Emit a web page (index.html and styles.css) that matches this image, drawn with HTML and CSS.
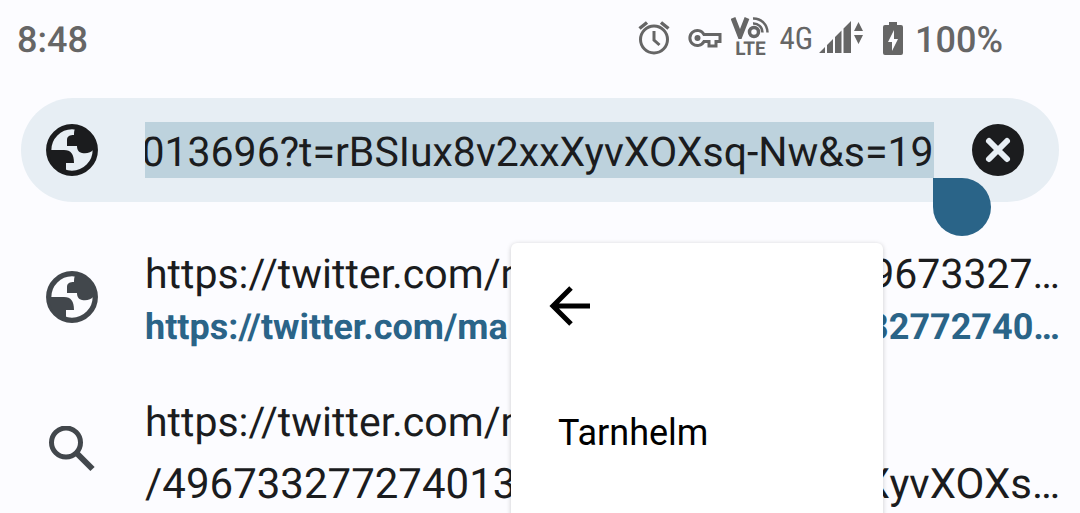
FILE: index.html
```
<!DOCTYPE html>
<html lang="en">
<head>
<meta charset="utf-8">
<meta name="viewport" content="width=device-width, initial-scale=1">
<title>Address bar</title>
<link rel="stylesheet" href="styles.css">
</head>
<body>
<header class="status">
  <time class="status-time">8:48</time>
  <div class="status-icons">
    <svg class="alarm" width="32" height="34" viewBox="0 0 32 34" fill="none" stroke="currentColor" stroke-width="3">
      <circle cx="16" cy="18.500" r="13.500"/><path d="M16 10v9l5.500 5"/><path d="M1.500 7.500L9 1.500M30.500 7.500L23 1.500" stroke-width="3.500"/>
    </svg>
    <svg class="key" width="34" height="20" viewBox="0 0 34 20" fill="none" stroke="currentColor" stroke-width="3">
      <path d="M16 6.500A7.500 7.500 0 1 0 16 13.500H21V18H28V13.500H32V6.500Z"/><circle cx="9.500" cy="10" r="3" fill="currentColor" stroke="none"/>
    </svg>
    <div class="volte">
      <svg width="38" height="22" viewBox="0 0 38 22" fill="none" stroke="currentColor">
        <path d="M2 1L9 19L16 1" stroke-width="5"/><circle cx="23" cy="15" r="4.500" stroke-width="3.500"/>
        <path d="M22 6.500a9 9 0 0 1 9.500 9M22 1.500a14 14 0 0 1 14.500 14" stroke-width="2.500"/>
      </svg>
      <span>LTE</span>
    </div>
    <span class="network">4G</span>
    <svg class="signal" width="44" height="32" viewBox="0 0 44 32" fill="currentColor">
      <path d="M0 32L6 26V32ZM8 24L14 18V32H8ZM16 16L22.500 9.500V32H16ZM24.500 7.500L32 0V32H24.500ZM35 10L39.500 1L44 10ZM35 14H44L39.500 23Z"/>
    </svg>
    <svg class="battery" width="20" height="33" viewBox="0 0 20 33">
      <path fill="currentColor" d="M6 0H14V3H18Q20 3 20 5V31Q20 33 18 33H2Q0 33 0 31V5Q0 3 2 3H6Z"/><path fill="#fcfcff" d="M11 8L5 20H9V29L15 17H11Z"/>
    </svg>
    <span class="percent">100%</span>
  </div>
</header>

<svg class="symbols" aria-hidden="true">
  <symbol id="globe" viewBox="0 0 52 52">
    <circle cx="26" cy="26" r="23.300" fill="none" stroke="currentColor" stroke-width="5.300"/>
    <path fill="currentColor" d="M30 3C42 5 50 15 48 25C45 29 40 30 36 29C32 28 31 25 31 22H21V16C21 12 24 11 28 11C28 8 28 6 30 3Z"/>
    <path fill="currentColor" d="M3 26H18C25 26 28 30 28 39H20V48C9 46 3 37 3 26Z"/>
  </symbol>
</svg>

<main>
  <form class="omnibox">
    <svg class="site-icon" width="52" height="52"><use href="#globe"/></svg>
    <div class="field">
      <input class="url" id="url" type="text" aria-label="Address" spellcheck="false" autocomplete="off" value="/496733277274013696?t=rBSIux8v2xxXyvXOXsq-Nw&amp;s=19">
      <span class="handle"></span>
    </div>
    <button class="clear" type="button" aria-label="Clear">
      <svg width="52" height="52" viewBox="0 0 52 52"><circle cx="26" cy="26" r="26" fill="#1b1c1e"/><path d="M17 17L35 35M35 17L17 35" stroke="#e7eef4" stroke-width="6" stroke-linecap="round"/></svg>
    </button>
  </form>

  <div class="suggestions">
    <a class="row" href="#first">
      <svg class="site-icon" width="52" height="52"><use href="#globe"/></svg>
      <span class="lines">
        <span class="line"><span>https://twitter.com/m</span><span>9673327…</span></span>
        <span class="line match"><span>https://twitter.com/ma</span><span>32772740…</span></span>
      </span>
    </a>
    <a class="row wrapped" href="#second">
      <svg class="site-icon" width="52" height="52" viewBox="0 0 52 52" fill="none" stroke="currentColor" stroke-width="5"><circle cx="20" cy="16.500" r="14.500"/><path d="M30.500 27L46.500 43" stroke-width="6"/></svg>
      <span class="lines">
        <span class="line"><span>https://twitter.com/m</span></span>
        <span class="line digits"><span>/496733277274013</span><span>XyvXOXs…</span></span>
      </span>
    </a>
    <div class="popup">
      <button class="back" type="button" aria-label="Back">
        <svg width="42" height="40" viewBox="0 0 42 40" fill="none" stroke="#000" stroke-width="5"><path d="M22 2L4 20L22 38M4 20H41"/></svg>
      </button>
      <button class="action" type="button">Tarnhelm</button>
    </div>
  </div>
</main>
<script src="page.js"></script>
</body>
</html>
```

FILE: styles.css
```
* { box-sizing: border-box; }
html { overflow: hidden; }
body {
  margin: 0;
  background: #fcfcff;
  color: #1b1c1e;
  font-family: Roboto, sans-serif;
  font-size: 41px;
  text-rendering: geometricPrecision;
}
svg { display: block; flex: none; }
button { padding: 0; border: 0; background: none; color: inherit; font: inherit; }
.symbols { position: absolute; width: 0; height: 0; }

.status {
  display: flex;
  justify-content: space-between;
  align-items: center;
  height: 80px;
  padding: 0 77px 0 17px;
  color: #666;
  font-size: 36px;
  font-weight: 500;
}
.status-icons { display: flex; align-items: center; }
.alarm { margin: 0 18px 4px 0; }
.key { margin: 0 9px 4px 0; }
.volte { display: flex; flex-direction: column; align-items: center; margin: 0 10px 4px 0; }
.volte span { font-size: 19px; line-height: 20px; font-weight: 700; }
.network { margin: 0 6px 4px 0; font-family: "Roboto Condensed", Roboto, sans-serif; font-size: 31px; font-weight: 400; }
.signal { margin: 0 20px 6px 0; }
.battery { margin: 0 12px 4px 0; }

.omnibox {
  display: flex;
  align-items: center;
  margin: 18px 21px 0;
  padding: 24px 35px 24px 25px;
  border-radius: 52px;
  background: #e7eef4;
}
.field { position: relative; flex: 1; min-width: 0; margin: 0 38px 0 47px; }
.url {
  display: block;
  width: 100%;
  height: 56px;
  padding: 6px 0 0;
  border: 0;
  outline: 0;
  background: #bdd2dd;
  color: inherit;
  font: inherit;
  line-height: 50px;
  text-rendering: inherit;
}
.url::selection { background: #bdd2dd; color: #1b1c1e; }
.handle {
  position: absolute;
  z-index: 1;
  top: 100%;
  left: 100%;
  width: 58px;
  height: 58px;
  margin-left: -1px;
  border-radius: 0 50% 50% 50%;
  background: #2a6488;
}

.suggestions { position: relative; padding: 45px 20px 0 46px; }
.row { display: flex; gap: 47px; color: inherit; text-decoration: none; }
.row .site-icon { margin-top: 24px; color: #42474c; }
.lines { flex: 1; min-width: 0; }
.line { display: flex; justify-content: space-between; line-height: 56px; white-space: nowrap; }
.match { color: #2a6488; font-size: 36px; font-weight: 700; line-height: 48px; }
.wrapped { margin-top: 41px; }
.wrapped .site-icon { margin-top: 34px; }
.wrapped .line { line-height: 62px; }
.digits { font-size: 42px; }

.popup {
  position: absolute;
  top: 41px;
  left: 511px;
  right: 197px;
  display: flex;
  flex-direction: column;
  align-items: flex-start;
  gap: 82px;
  padding: 43px 38px 62px;
  border-radius: 6px;
  background: #fff;
  box-shadow: 0 1px 5px rgba(0, 0, 0, 0.2);
}
.action { padding-left: 9px; color: #000; font-size: 36px; line-height: 50px; }
```

FILE: page.js
```
const url = document.getElementById("url");
url.focus();
url.select();
url.scrollLeft = url.scrollWidth;
```
